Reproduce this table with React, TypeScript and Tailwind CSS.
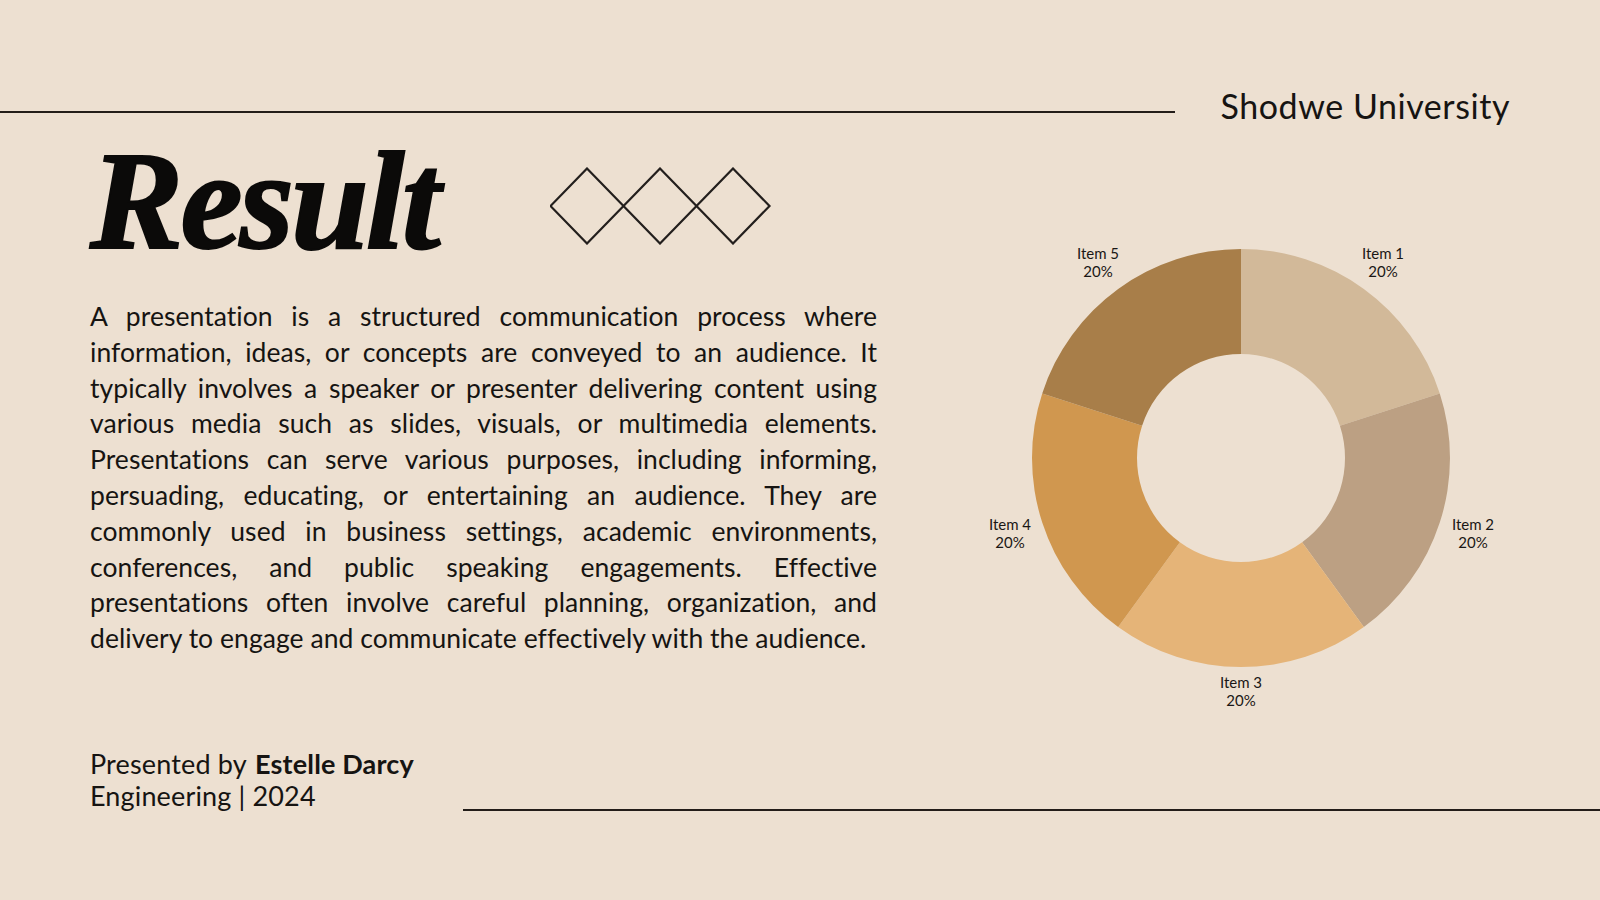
import React from "react";

const CX = 281;
const CY = 228;
const RO = 209;
const RI = 104;

const slices = [
  { label: "Item 1", color: "#d2b999", lx: 423, ly: 29 },
  { label: "Item 2", color: "#bca083", lx: 513, ly: 300 },
  { label: "Item 3", color: "#e5b478", lx: 281, ly: 458 },
  { label: "Item 4", color: "#d0974f", lx: 50, ly: 300 },
  { label: "Item 5", color: "#a87e49", lx: 138, ly: 29 },
];

function arcPath(a0: number, a1: number) {
  const rad = (d: number) => (d * Math.PI) / 180;
  const p = (r: number, a: number) => [CX + r * Math.cos(rad(a)), CY + r * Math.sin(rad(a))];
  const [x0, y0] = p(RO, a0);
  const [x1, y1] = p(RO, a1);
  const [x2, y2] = p(RI, a1);
  const [x3, y3] = p(RI, a0);
  return `M${x0} ${y0} A${RO} ${RO} 0 0 1 ${x1} ${y1} L${x2} ${y2} A${RI} ${RI} 0 0 0 ${x3} ${y3} Z`;
}

const lines = [
  "A presentation is a structured communication process where",
  "information, ideas, or concepts are conveyed to an audience. It",
  "typically involves a speaker or presenter delivering content using",
  "various media such as slides, visuals, or multimedia elements.",
  "Presentations can serve various purposes, including informing,",
  "persuading, educating, or entertaining an audience. They are",
  "commonly used in business settings, academic environments,",
  "conferences, and public speaking engagements. Effective",
  "presentations often involve careful planning, organization, and",
];
const lastLine = "delivery to engage and communicate effectively with the audience.";

export default function App() {
  return (
    <div className="w-[1600px] h-[900px] bg-[#ede0d1] overflow-hidden text-[#161412] [font-family:'Lato',sans-serif]">
      <header className="flex items-center pt-[86px] pr-[90px]">
        <div className="flex-1 h-[2px] bg-[#231d19] mt-[11px]" />
        <div className="ml-[46px] text-[34px] leading-[40px] tracking-[0.55px]">Shodwe University</div>
      </header>

      <main className="flex h-[528px] items-start">
        <div className="ml-[90px] w-[787px] flex flex-col">
          <div className="flex items-start mt-[5px] h-[140px]">
            <div className="w-[460px] text-[140px] leading-[140px] font-bold italic tracking-[-3px] [font-family:'Liberation_Serif',serif] text-[#0b0a09] [-webkit-text-stroke:2px_#0b0a09]">
              Result
            </div>
            <svg className="mt-[36px]" width="222" height="78" viewBox="0 0 222 78" fill="none">
              {[37, 110, 183].map((cx) => (
                <polygon
                  key={cx}
                  points={`${cx},1.5 ${cx + 36.5},39 ${cx},76.5 ${cx - 36.5},39`}
                  stroke="#231f1d"
                  strokeWidth="2.2"
                  strokeLinejoin="miter"
                />
              ))}
            </svg>
          </div>
          <div className="mt-[28px] text-[26.5px] leading-[35.8px] tracking-[0.05px]">
            {lines.map((l) => (
              <div key={l} className="whitespace-nowrap text-justify [text-align-last:justify]">
                {l}
              </div>
            ))}
            <div className="whitespace-nowrap text-left">{lastLine}</div>
          </div>
        </div>
        <svg className="ml-[83px] mt-[104px] overflow-visible shrink-0" width="560" height="490" viewBox="0 0 560 490">
          {slices.map((s, i) => (
            <path key={s.label} d={arcPath(-90 + i * 72, -90 + (i + 1) * 72)} fill={s.color} />
          ))}
          {slices.map((s) => (
            <text key={s.label} x={s.lx} y={s.ly} textAnchor="middle" fontSize="15" fill="#1a1715" fontFamily="Lato, sans-serif">
              <tspan x={s.lx}>{s.label}</tspan>
              <tspan x={s.lx} dy="18">20%</tspan>
            </text>
          ))}
        </svg>
      </main>

      <footer className="flex items-end mt-[94px]">
        <div className="ml-[90px] w-[373px] text-[27px] leading-[32px] tracking-[0.15px] whitespace-nowrap">
          <div>
            Presented by <span className="font-bold ml-[2px]">Estelle Darcy</span>
          </div>
          <div>Engineering | 2024</div>
        </div>
        <div className="flex-1 h-[2px] bg-[#231d19] mb-[1px]" />
      </footer>
    </div>
  );
}
